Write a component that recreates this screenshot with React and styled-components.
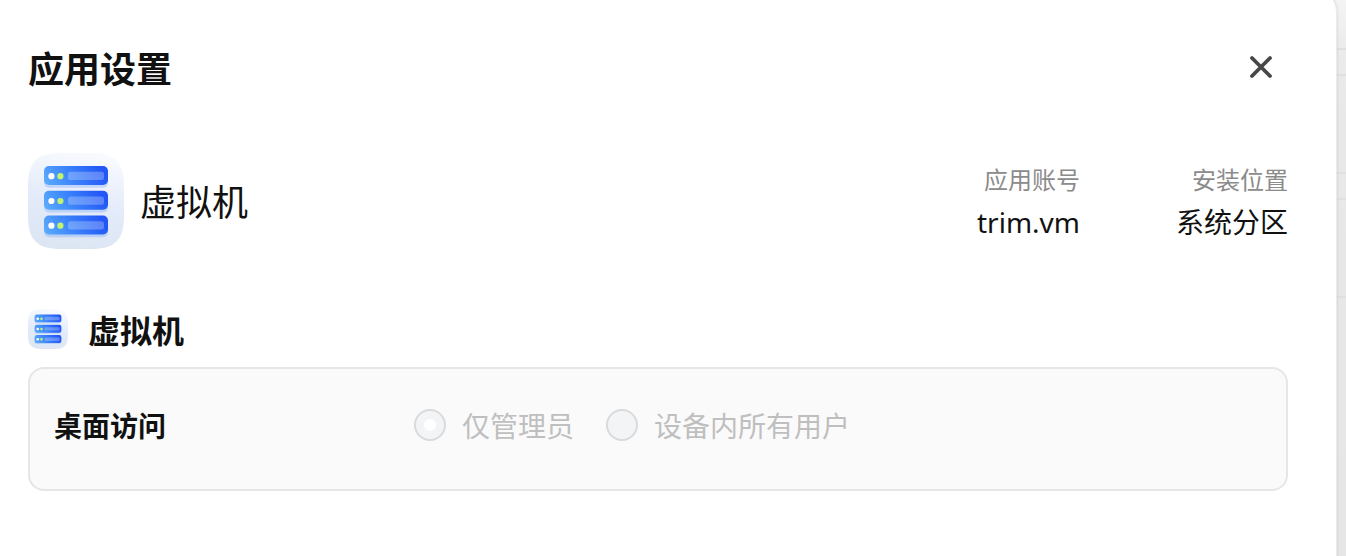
import React, { useId } from 'react';
import styled, { createGlobalStyle } from 'styled-components';

const GlobalStyle = createGlobalStyle`
  * {
    box-sizing: border-box;
  }
  body {
    margin: 0;
    overflow: hidden;
    background: #e7e7e7;
    color: #111;
    font-family: 'Noto Sans', 'Noto Sans CJK SC', sans-serif;
  }
`;

const Page = styled.div`
  display: grid;
  grid-template-columns: 1337px 1fr;
  height: 556px;
  overflow: hidden;
`;

const Dialog = styled.section`
  position: relative;
  z-index: 1;
  height: 620px;
  margin-top: -12px;
  padding: 55px 48px 0 28px;
  background: #fff;
  border-right: 1px solid #ebebeb;
  border-radius: 0 24px 24px 0;
  box-shadow: 0 0 3px rgba(0, 0, 0, 0.14);
`;

const Backdrop = styled.div`
  display: flex;
  flex-direction: column;
  margin-left: -24px;
  background: linear-gradient(#f4f4f4, #ebebeb 50px, #e8e8e8 120px, #e6e6e6);
`;

const BackdropRow = styled.div`
  flex: none;
  height: ${props => props.$height}px;
  border-bottom: 2px solid #e0e0e0;
`;

const Header = styled.header`
  display: flex;
  justify-content: space-between;
  align-items: center;
  height: 54px;
`;

const Title = styled.h1`
  margin: 0;
  font-size: 36px;
  line-height: 54px;
  font-weight: 700;
`;

const CloseButton = styled.button`
  display: flex;
  margin: 0 11px 6px 0;
  padding: 0;
  border: none;
  background: none;
  cursor: pointer;
`;

const AppInfo = styled.div`
  display: flex;
  align-items: center;
  height: 96px;
  margin-top: 56px;
`;

const AppName = styled.div`
  flex: 1;
  margin-left: 16px;
  padding-top: 4px;
  font-size: 36px;
  line-height: 54px;
`;

const Meta = styled.div`
  margin-left: 96px;
  padding-top: 4px;
  text-align: right;
`;

const MetaLabel = styled.div`
  color: #8b8b8b;
  font-size: 24px;
  line-height: 36px;
`;

const MetaValue = styled.div`
  margin-top: 2px;
  font-size: 28px;
  line-height: 44px;
`;

const SectionTitle = styled.h2`
  display: flex;
  align-items: center;
  gap: 20px;
  height: 40px;
  margin: 60px 0 18px;
  font-size: 32px;
  font-weight: 700;
`;

const SectionText = styled.span`
  padding-top: 4px;
  line-height: 40px;
`;

const Card = styled.div`
  display: flex;
  align-items: center;
  height: 124px;
  padding: 0 24px 8px;
  background: #fafafa;
  border: 2px solid #e6e6e6;
  border-radius: 16px;
`;

const FieldLabel = styled.div`
  width: 360px;
  padding-top: 2px;
  font-size: 28px;
  line-height: 40px;
  font-weight: 700;
`;

const RadioGroup = styled.div`
  display: flex;
  gap: 32px;
`;

const RadioOption = styled.label`
  display: flex;
  align-items: center;
  gap: 16px;
`;

const RadioCircle = styled.span`
  display: flex;
  justify-content: center;
  align-items: center;
  width: 32px;
  height: 32px;
  background: #f3f4f6;
  border: 2px solid #d9dadb;
  border-radius: 50%;
  &::after {
    content: '';
    width: 12px;
    height: 12px;
    border-radius: 50%;
    background: ${props => props.$checked ? '#fff' : 'transparent'};
  }
`;

const RadioText = styled.span`
  padding-top: 2px;
  color: #bfbfbf;
  font-size: 28px;
  line-height: 40px;
`;

const BACKDROP_ROWS = [50, 26, 98, 26, 98];

const OPTIONS = [
  { label: '仅管理员', checked: true },
  { label: '设备内所有用户', checked: false },
];

function VmIcon({ size }) {
  const id = useId();

  return (
    <svg width={size} height={size} viewBox="0 0 96 96">
      <defs>
        <linearGradient id={`${id}-tile`} x1="0.6" y1="0" x2="0.4" y2="1">
          <stop offset="0" stopColor="#f8fafe" />
          <stop offset="0.5" stopColor="#e4ebfa" />
          <stop offset="1" stopColor="#dce6f3" />
        </linearGradient>
        <linearGradient id={`${id}-unit`} gradientUnits="userSpaceOnUse" x1="22" y1="24" x2="68" y2="-6">
          <stop offset="0" stopColor="#5aabfb" />
          <stop offset="0.5" stopColor="#397ffa" />
          <stop offset="1" stopColor="#2356f6" />
        </linearGradient>
      </defs>
      <path
        d="M0 33C0 9 9 0 33 0H63C87 0 96 9 96 33V63C96 87 87 96 63 96H33C9 96 0 87 0 63Z"
        fill={`url(#${id}-tile)`}
      />
      {[13, 37.8, 62.5].map(y => (
        <g key={y} transform={`translate(0 ${y})`}>
          <rect x="16" y="2.7" width="64" height="19" rx="5" fill="#5b92f5" fillOpacity="0.28" />
          <rect x="16" width="64" height="19" rx="5" fill={`url(#${id}-unit)`} />
          <circle cx="23.4" cy="10.2" r="3.1" fill="#fff" />
          <circle cx="32.4" cy="10.2" r="3.1" fill="#bff46c" />
          <rect x="40" y="5.8" width="36" height="8.2" rx="2.5" fill="#fff" fillOpacity="0.26" />
        </g>
      ))}
    </svg>
  );
}

function App() {
  return (
    <Page>
      <GlobalStyle />
      <Dialog>
        <Header>
          <Title>应用设置</Title>
          <CloseButton aria-label="关闭">
            <svg width="32" height="32" viewBox="0 0 32 32" fill="none">
              <path d="M7 7L25 25M25 7L7 25" stroke="#474747" strokeWidth="3.8" strokeLinecap="round" />
            </svg>
          </CloseButton>
        </Header>
        <AppInfo>
          <VmIcon size={96} />
          <AppName>虚拟机</AppName>
          <Meta>
            <MetaLabel>应用账号</MetaLabel>
            <MetaValue>trim.vm</MetaValue>
          </Meta>
          <Meta>
            <MetaLabel>安装位置</MetaLabel>
            <MetaValue>系统分区</MetaValue>
          </Meta>
        </AppInfo>
        <SectionTitle>
          <VmIcon size={40} />
          <SectionText>虚拟机</SectionText>
        </SectionTitle>
        <Card>
          <FieldLabel>桌面访问</FieldLabel>
          <RadioGroup>
            {OPTIONS.map(option => (
              <RadioOption key={option.label}>
                <RadioCircle $checked={option.checked} />
                <RadioText>{option.label}</RadioText>
              </RadioOption>
            ))}
          </RadioGroup>
        </Card>
      </Dialog>
      <Backdrop>
        {BACKDROP_ROWS.map((height, index) => (
          <BackdropRow key={index} $height={height} />
        ))}
      </Backdrop>
    </Page>
  );
}

export default App;
